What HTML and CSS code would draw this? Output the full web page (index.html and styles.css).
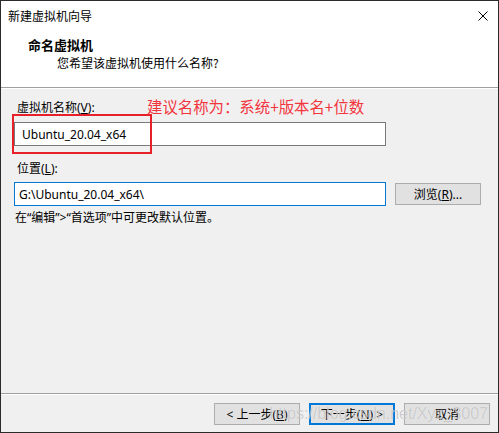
FILE: index.html
```html
<!DOCTYPE html>
<html lang="zh-CN">
<head>
    <meta charset="UTF-8">
    <meta name="viewport" content="width=device-width, initial-scale=1.0">
    <title>新建虚拟机向导</title>
    <link rel="stylesheet" href="styles.css">
</head>
<body>

    <div class="window">
        <!-- Header -->
        <div class="header">
            <div class="titlebar">
                <span class="title">新建虚拟机向导</span>
                <span class="close">
                    <svg width="10" height="10" viewBox="0 0 10 10">
                        <path d="M0.5 0.5 L9.5 9.5 M9.5 0.5 L0.5 9.5" stroke="#000" stroke-width="1" fill="none"/>
                    </svg>
                </span>
            </div>
            <div class="heading">命名虚拟机</div>
            <div class="subtitle">您希望该虚拟机使用什么名称?</div>
        </div>

        <!-- Form -->
        <div class="content">
            <div class="label">虚拟机名称(<u>V</u>):</div>
            <div class="input">Ubuntu_20.04_x64</div>

            <div class="label label-gap">位置(<u>L</u>):</div>
            <div class="row">
                <div class="input input-focus">G:\Ubuntu_20.04_x64\</div>
                <button class="btn">浏览(<u>R</u>)...</button>
            </div>
            <div class="hint">在“编辑”&gt;“首选项”中可更改默认位置。</div>
        </div>

        <!-- Footer buttons -->
        <div class="footer">
            <button class="btn btn-nav">&lt; 上一步(<u>B</u>)</button>
            <button class="btn btn-nav btn-default">下一步(<u>N</u>) &gt;</button>
            <button class="btn btn-nav">取消</button>
        </div>

        <!-- Annotations -->
        <div class="mark-box"></div>
        <div class="mark-text">建议名称为：系统+版本名+位数</div>
        <div class="watermark">https://blog.csdn.net/Xyz_3007</div>
    </div>

</body>
</html>
```

FILE: styles.css
```css
body {
    margin: 0;
    padding: 0;
    font-family: "Noto Sans", "Noto Sans CJK SC", sans-serif;
    font-size: 12px;
    color: #000;
}
.window {
    position: relative;
    height: 433px;
    box-sizing: border-box;
    border: 1px solid #2b2b2b;
    background: #f0f0f0;
    display: flex;
    flex-direction: column;
    overflow: hidden;
}
.header {
    background: #fff;
    height: 86px;
    border-bottom: 1px solid #a0a0a0;
}
.titlebar {
    height: 29px;
    display: flex;
    align-items: center;
    justify-content: space-between;
    padding: 0 10px 0 7px;
}
.title {
    font-family: "Noto Sans CJK SC", sans-serif;
}
.close {
    display: flex;
}
.heading {
    font-family: "Noto Sans CJK SC", sans-serif;
    font-weight: bold;
    font-size: 13px;
    line-height: 18px;
    margin-top: 6px;
    padding-left: 27px;
}
.subtitle {
    font-family: "Noto Sans CJK SC", sans-serif;
    line-height: 18px;
    padding-left: 56px;
}
.content {
    border-top: 1px solid #fff;
    padding: 10px 13px 0 13px;
}
.label {
    line-height: 18px;
    padding-left: 3px;
}
.label-gap {
    margin-top: 14px;
}
.input {
    margin-top: 5px;
    height: 24px;
    box-sizing: border-box;
    width: 372px;
    border: 1px solid #7a7a7a;
    background: #fff;
    padding-left: 7px;
    display: flex;
    align-items: center;
    font-size: 12px;
}
.input-focus {
    margin-top: 0;
    border-color: #0078d7;
    padding-left: 4px;
}
.row {
    margin-top: 4px;
    display: flex;
    align-items: center;
    gap: 9px;
}
.hint {
    margin-top: 3px;
    line-height: 18px;
    padding-left: 1px;
}
.btn {
    font-family: "Noto Sans", "Noto Sans CJK SC", sans-serif;
    font-size: 12px;
    width: 86px;
    height: 22px;
    padding: 0;
    background: #e1e1e1;
    border: 1px solid #adadad;
    color: #000;
}
.footer {
    margin-top: auto;
    border-top: 1px solid #a0a0a0;
    box-shadow: inset 0 1px 0 #fff;
    padding: 9px 8px 7px 0;
    display: flex;
    justify-content: flex-end;
    gap: 9px;
}
.btn-default {
    border: 2px solid #0078d7;
}
.mark-box {
    position: absolute;
    left: 11px;
    top: 113px;
    width: 140px;
    height: 40px;
    box-sizing: border-box;
    border: 2px solid #e8202a;
}
.mark-text {
    position: absolute;
    left: 146px;
    top: 95px;
    font-family: "Noto Sans CJK SC", sans-serif;
    font-size: 15.4px;
    line-height: 20px;
    color: #f2353d;
}
.watermark {
    position: absolute;
    right: 10px;
    top: 403px;
    font-family: "Liberation Sans", sans-serif;
    font-size: 16px;
    line-height: 20px;
    color: rgba(150, 150, 150, 0.45);
    text-shadow: 0 0 1px rgba(255, 255, 255, 0.8);
    pointer-events: none;
}
```
